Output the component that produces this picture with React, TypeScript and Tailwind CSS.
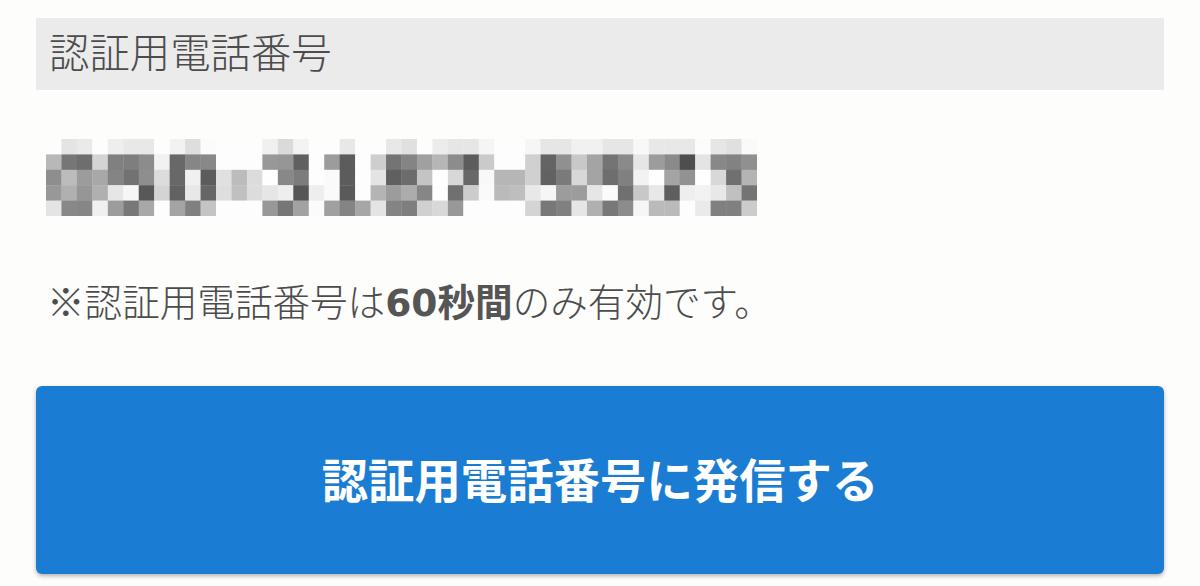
import React from 'react'

const mosaic = [
  'fd e4 ea fd ee e8 e8 fd f2 de fb fd fd fd f0 da f3 fd fd e8 fd fd e8 e0 fd ec e6 e6 f5 fd fd f6 e6 e6 f1 f1 e6 e6 f8 e8 e8 e8 fc e6 e0 fa',
  'b8 76 6e d4 80 7e 8c f2 68 86 88 fd fd fd 98 96 60 fd 9c 5c fd ce 74 84 a0 b6 8c 5c ca fd fd d0 64 90 c8 a4 74 8a e6 9c 8a 4e e4 88 82 90',
  '8e bc 9c a8 84 72 8e dc 68 f0 5c e0 bc dc fe 88 7c fd fa 5c fd e4 60 6c c4 fe d8 68 f8 b6 b6 d0 62 7a d8 a4 6e 80 f2 fe a4 92 fe d8 70 b4',
  '98 b0 96 b0 e6 f6 58 d4 62 e8 66 de c0 dc e6 ee 56 ee fa 5a fd b4 9c ac 86 fd 70 cc fa ba be e8 f6 9c 9c e6 fb 70 c8 e8 5e ee f2 e8 c0 74',
  'e4 88 86 f0 9c 78 a8 fd a4 80 c4 fd fd fd 98 76 a2 fb a0 84 a6 e4 84 7e d0 d8 98 fd fd fd fd d4 78 80 e6 b0 78 8c f6 ba ba fd ea 80 80 cc',
].map((row) => row.split(' '))

function Mosaic() {
  return (
    <svg viewBox="0 0 46 5" preserveAspectRatio="none" className="block w-[711px] h-[77px]">
      {mosaic.map((row, y) =>
        row.map((v, x) => <rect key={`${x}-${y}`} x={x} y={y} width={1.02} height={1.02} fill={`#${v}${v}${v}`} />),
      )}
    </svg>
  )
}

export default function App() {
  return (
    <div className="w-[1200px] h-[586px] overflow-hidden bg-[#fdfdfc] px-9 pt-[18px] text-[#4c4c4c] font-['DejaVu_Sans','Noto_Sans_CJK_JP',sans-serif]">
      <div className="h-[72px] bg-[#ebebec] pl-[13px] pt-px flex items-center text-[40.4px] font-light leading-none">
        認証用電話番号
      </div>
      <div className="mt-[49px] ml-[10px]">
        <Mosaic />
      </div>
      <p className="mt-[59px] ml-[11px] h-[49px] text-[37.6px] font-light leading-[49px] whitespace-nowrap">
        <span className="font-['Noto_Sans_CJK_JP',sans-serif]">※</span>認証用電話番号は<b className="font-bold text-[#555555]">60秒間</b>のみ有効です。
      </p>
      <button className="mt-[62px] w-full h-[188px] pt-[6px] rounded-[6px] bg-[#1a7cd3] text-white text-[46.4px] font-bold shadow-[0_2px_4px_rgba(0,0,0,0.3)]">
        認証用電話番号に発信する
      </button>
    </div>
  )
}
